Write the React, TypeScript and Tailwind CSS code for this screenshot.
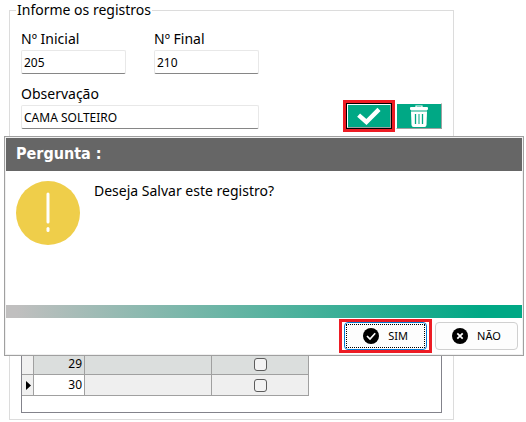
import React, { useState } from 'react';
import clsx from 'clsx';

interface Registro {
  numero: number;
  atual: boolean;
}

const registros: Registro[] = [
  { numero: 29, atual: false },
  { numero: 30, atual: true },
];

function CheckIcon() {
  return (
    <svg width="24" height="18" viewBox="0 0 24 18" aria-hidden="true">
      <path d="M1.6 8.2 L9.4 15 L22 2.4" fill="none" stroke="#fff" strokeWidth="4.4" />
    </svg>
  );
}

function TrashIcon() {
  return (
    <svg width="18" height="22" viewBox="0 0 18 22" aria-hidden="true">
      <path d="M6 2.5 V1 H12 V2.5" fill="none" stroke="#fff" strokeWidth="1.2" />
      <rect x="0" y="2" width="18" height="3" rx="1" fill="#fff" />
      <rect x="1" y="5" width="16" height="2" fill="#7fd3c1" />
      <path d="M1 7 H17 L16.5 20 Q16.4 22 14.5 22 H3.5 Q1.6 22 1.5 20 Z" fill="#fff" />
      <path d="M5.5 9 V19 M12.5 9 V19" stroke="#00a885" strokeWidth="1.3" />
      <path d="M8.5 9 V19 M9.5 9 V19" stroke="#7fd3c1" strokeWidth="1" />
    </svg>
  );
}

function WarningIcon() {
  return (
    <svg width="64" height="64" viewBox="0 0 64 64" className="shrink-0" aria-hidden="true">
      <circle cx="32" cy="32" r="32" fill="#efce4a" />
      <path d="M32 13 V41" stroke="#fff" strokeWidth="3" strokeLinecap="round" />
      <path d="M32 47.5 V49.5" stroke="#fff" strokeWidth="3" strokeLinecap="round" />
    </svg>
  );
}

function RoundIcon({ path }: { path: string }) {
  return (
    <svg width="16" height="16" viewBox="0 0 16 16" aria-hidden="true">
      <circle cx="8" cy="8" r="8" fill="#000" />
      <path d={path} fill="none" stroke="#fff" strokeWidth="1.7" />
    </svg>
  );
}

function Campo({ id, label, valor, className }: { id: string; label: string; valor: string; className: string }) {
  const [texto, setTexto] = useState(valor);

  return (
    <div className={clsx('flex flex-col gap-px', className)}>
      <label htmlFor={id} className="text-[14px] leading-5">{label}</label>
      <input
        id={id}
        value={texto}
        onChange={(e) => setTexto(e.target.value)}
        className="h-6 w-full rounded-[2px] border border-[#e8e8e8] border-b-[#868686] bg-white px-[2px] text-[12px] outline-none"
      />
    </div>
  );
}

// Grade com os registros já lançados
function Grade() {
  return (
    <div className="mt-[14px] flex h-[270px] flex-col justify-end border border-[#83838b] pb-4">
      <table className="w-[287px] table-fixed border-separate border-spacing-0 text-[12px] leading-5">
        <colgroup>
          <col className="w-[12px]" />
          <col className="w-[51px]" />
          <col className="w-[127px]" />
          <col className="w-[97px]" />
        </colgroup>
        <tbody>
          {registros.map((r) => (
            <tr
              key={r.numero}
              className={clsx(
                'h-[21px] *:border-r *:border-b *:border-[#a0a0a0] *:p-0',
                r.atual ? 'bg-[#efefef]' : 'bg-[#dbdedd]'
              )}
            >
              <td className="bg-[#f0f0f0]">
                {r.atual && (
                  <svg width="5" height="9" viewBox="0 0 5 9" className="ml-1 block" aria-hidden="true">
                    <path d="M0 0 L5 4.5 L0 9 Z" fill="#000" />
                  </svg>
                )}
              </td>
              <td className={clsx('text-right', r.atual && 'bg-white')}>
                <span className="pr-[2px]">{r.numero}</span>
              </td>
              <td />
              <td>
                <input
                  type="checkbox"
                  aria-label={`Selecionar ${r.numero}`}
                  className="mx-auto block size-[13px] appearance-none rounded-[3px] border border-[#5c5c5c] bg-[#f3f3f3]"
                />
              </td>
            </tr>
          ))}
        </tbody>
      </table>
    </div>
  );
}

function Pergunta() {
  return (
    <div
      role="dialog"
      aria-labelledby="pergunta-titulo"
      className="absolute top-[136px] right-[2px] left-1 border border-[#a0a0a0] bg-white"
    >
      <div className="border border-[#f0f0f0]">
        <h2
          id="pergunta-titulo"
          className="h-[33px] bg-[#666] px-[10px] font-['DejaVu_Sans_Condensed','DejaVu_Sans',sans-serif] text-[16px] leading-[31px] font-bold text-white"
        >
          Pergunta :
        </h2>
        <div className="flex h-[134px] gap-[14px] px-[10px] pt-[10px]">
          <WarningIcon />
          <p className="text-[14px] leading-5">Deseja Salvar este registro?</p>
        </div>
        <div className="h-[13px] bg-linear-to-r/srgb from-[#c0bfbf] from-2% to-[#00a885] to-92%" />
        <div className="flex items-center justify-end gap-[3px] py-px pr-1 text-[11px]">
          <div className="border-3 border-[#ed1c24] px-[2px]">
            <button className="flex h-7 w-[83px] rounded-[4px] border border-[#0078d4] bg-[#fdfdfd] p-px">
              <span className="flex size-full items-center justify-center gap-[9px] border border-dotted border-black">
                <RoundIcon path="M4 8 L7 11 L12.2 5.3" />
                SIM
              </span>
            </button>
          </div>
          <button className="flex h-7 w-[83px] items-center justify-center gap-[9px] rounded-[4px] border border-[#d0d0d0] bg-[#fdfdfd]">
            <RoundIcon path="M5.3 5.3 L10.7 10.7 M10.7 5.3 L5.3 10.7" />
            NÃO
          </button>
        </div>
      </div>
    </div>
  );
}

export default function App() {
  return (
    <div className="relative bg-white font-['Noto_Sans',sans-serif] text-black">
      <fieldset className="mr-[72px] ml-[9px] border border-[#dcdcdc] px-[6px] pt-[9px] pb-[6px]">
        <legend className="px-px text-[14px] leading-5">Informe os registros</legend>
        <div className="px-[5px]">
          <div className="flex gap-7">
            <Campo id="inicial" label="Nº Inicial" valor="205" className="w-[105px]" />
            <Campo id="final" label="Nº Final" valor="210" className="w-[105px]" />
          </div>
          <div className="mt-[10px] flex items-end justify-between">
            <Campo id="observacao" label="Observação" valor="CAMA SOLTEIRO" className="w-[238px]" />
            <div className="flex gap-1">
              <button
                aria-label="Salvar"
                className="h-[26px] w-[46px] border border-black bg-[#00a885] outline-3 outline-[#ed1c24]"
              >
                <span className="flex size-full items-center justify-center border border-t-white border-r-[#a0a0a0] border-b-[#a0a0a0] border-l-white">
                  <CheckIcon />
                </span>
              </button>
              <button
                aria-label="Excluir"
                className="flex h-[26px] w-[46px] items-center justify-center border border-t-white border-r-[#a0a0a0] border-b-[#a0a0a0] border-l-white bg-[#00a885]"
              >
                <TrashIcon />
              </button>
            </div>
          </div>
          <Grade />
        </div>
      </fieldset>
      <Pergunta />
    </div>
  );
}
